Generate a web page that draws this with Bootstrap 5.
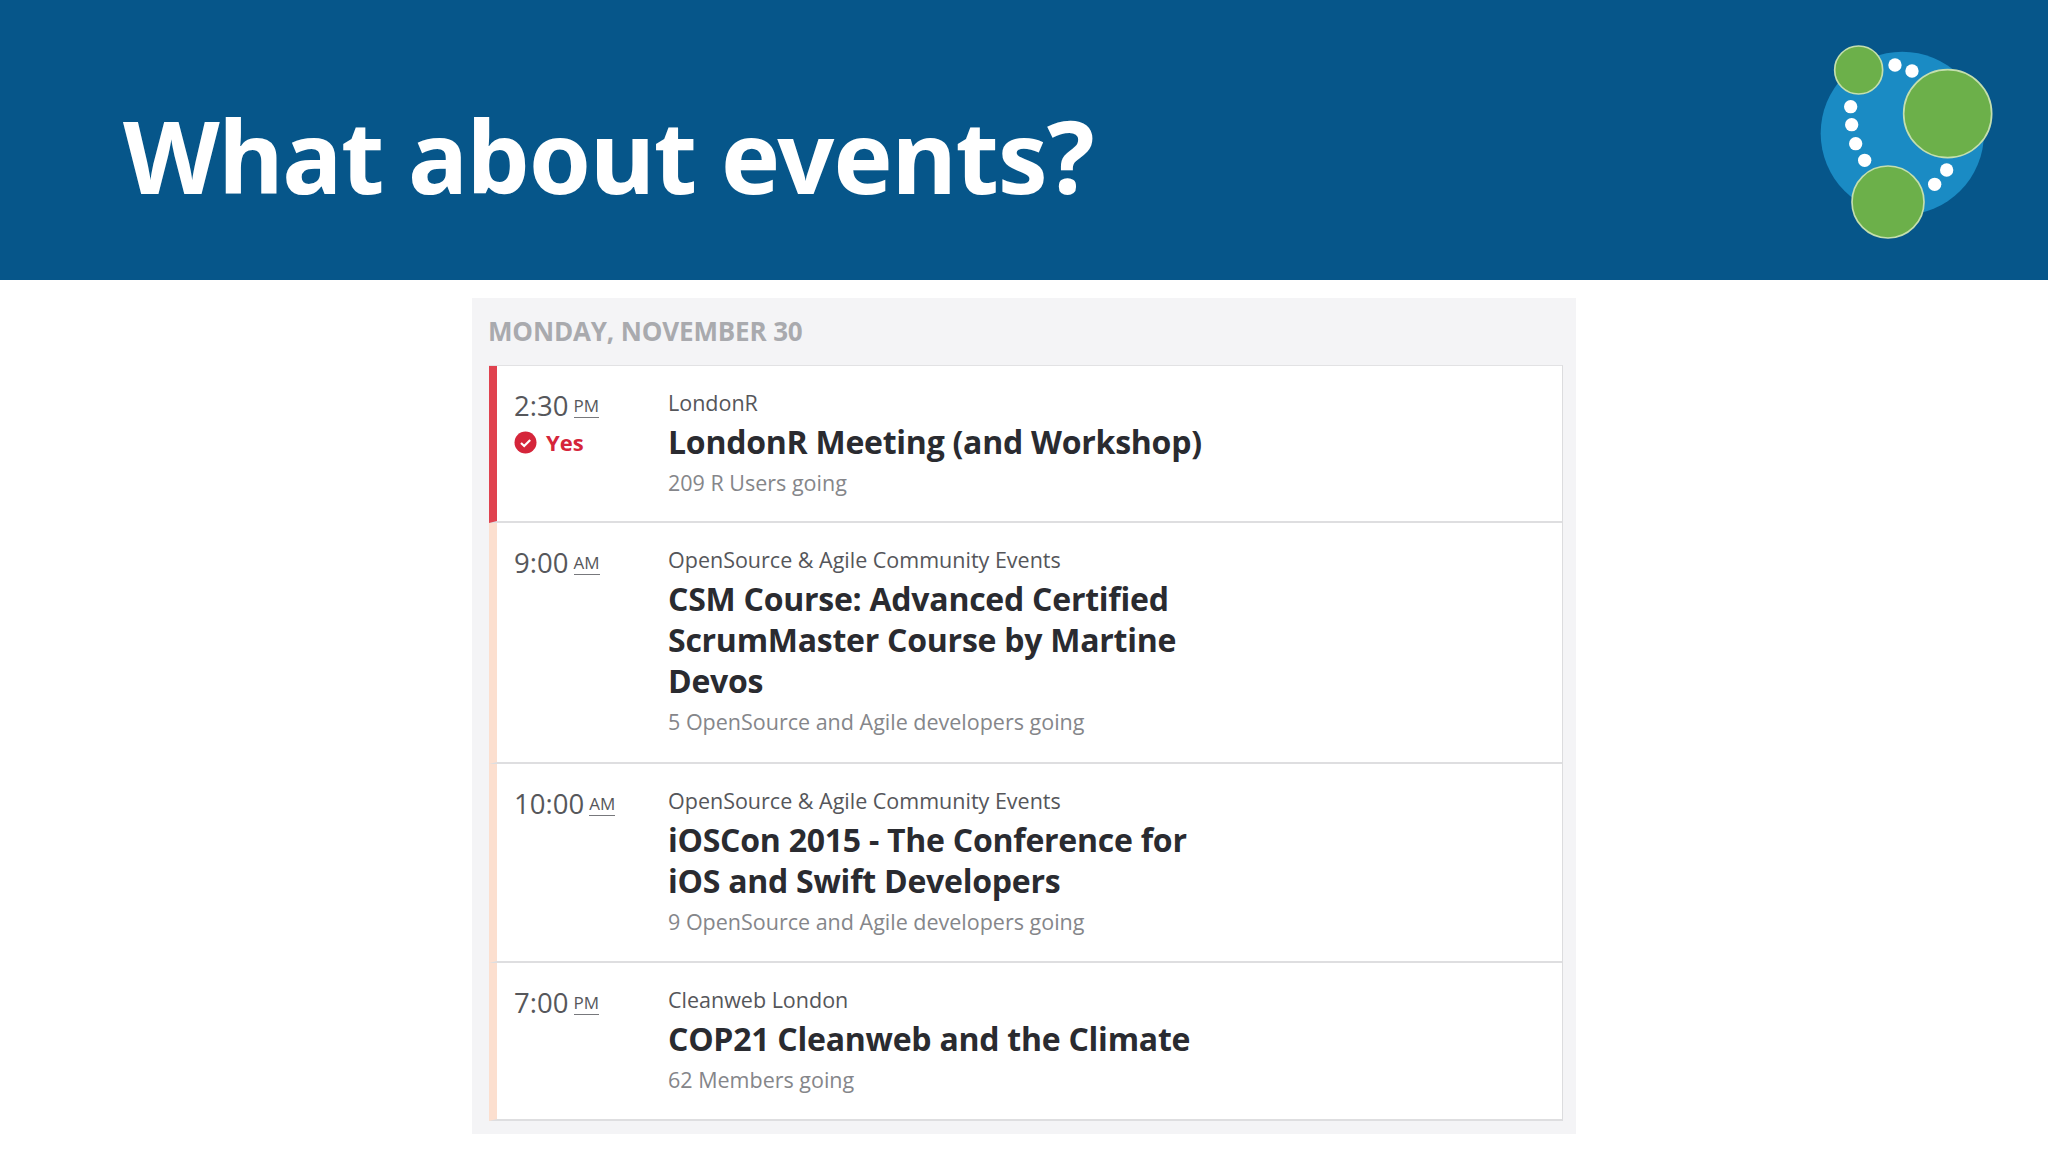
<!doctype html>
<html lang="en">
<head>
<meta charset="utf-8">
<title>What about events?</title>
<link rel="stylesheet" href="https://cdn.jsdelivr.net/npm/bootstrap@5.3.0/dist/css/bootstrap.min.css">
<style>
html,body{height:1152px;overflow:hidden;background:#fff}
body{font-family:"Open Sans","Liberation Sans",sans-serif}
.slide-banner{height:280px;background:#06568a;padding:0 28px 0 123px}
.slide-title{font-family:"Noto Sans",sans-serif;font-weight:700;font-size:100px;line-height:1;color:#fff;margin:0;letter-spacing:-1.2px;position:relative;top:15px}
.day-panel{width:1104px;margin:18px auto 0;background:#f4f4f6;padding:0 13px 13px 16px;height:836px}
.day-head{height:67px;font-size:26px;font-weight:700;color:#a9aaae;text-transform:uppercase;letter-spacing:-.15px;padding-top:15px;line-height:36px}
.day-list{background:#fff;border-right:1px solid #dcdcde;border-top:1px solid #e2e2e4;margin-left:1px}
.ev-row{border-left:8px solid #fcdfcf;border-bottom:2px solid #dedee0;padding:0 0 0 17px}
.ev-row.going{border-left-color:#e0424f}
.h1r{height:157px}.h2r{height:241px}.h3r{height:199px}.h4r{height:158px}
.ev-time{width:154px;flex:none;padding-top:23px;color:#56575b;font-size:27.5px;line-height:34px;font-weight:400}
.ev-mer{font-size:17px;line-height:18px;border-bottom:1px solid #77787c;display:inline-block;margin-left:-2px;padding-bottom:2px;vertical-align:4px}
.ev-yes{display:flex;align-items:center;gap:9px;color:#d5253a;font-weight:700;font-size:22px;line-height:26px;margin-top:6px}
.ev-body{padding-top:22px;width:560px}
.ev-group{color:#55565a;font-size:21.5px;line-height:29px}
.ev-name{color:#2a2b30;font-weight:700;font-size:32px;line-height:41px;margin:4px 0 6px;letter-spacing:-.25px}
.ev-count{color:#85868a;font-size:21.5px;line-height:29px}
</style>
</head>
<body>
<header class="slide-banner d-flex justify-content-between align-items-center">
  <h1 class="slide-title">What about events?</h1>
  <svg width="240" height="240" viewBox="0 0 720 720" aria-label="Neo4j logo" role="img">
    <circle cx="367" cy="340" r="245" fill="#1a8bc4"/>
    <g fill="#6cb04a" stroke="#c4dfae" stroke-width="5">
      <circle cx="236" cy="150" r="72"/>
      <circle cx="503" cy="281" r="132"/>
      <circle cx="324" cy="546" r="108"/>
    </g>
    <g fill="#fff">
      <circle cx="345" cy="135" r="20"/><circle cx="396" cy="153" r="20"/>
      <circle cx="212" cy="260" r="20"/><circle cx="215" cy="314" r="20"/>
      <circle cx="227" cy="371" r="20"/><circle cx="254" cy="421" r="20"/>
      <circle cx="500" cy="450" r="20"/><circle cx="464" cy="493" r="20"/>
    </g>
  </svg>
</header>
<main class="day-panel">
  <div class="day-head">Monday, November 30</div>
  <div class="day-list">
    <div class="ev-row going h1r d-flex">
      <div class="ev-time">2:30 <span class="ev-mer">PM</span>
        <div class="ev-yes"><svg width="23" height="23" viewBox="0 0 23 23"><circle cx="11.5" cy="11.5" r="11" fill="#d5253a"/><path d="M7 12l3.2 3 6-6" fill="none" stroke="#fff" stroke-width="2.2"/></svg>Yes</div>
      </div>
      <div class="ev-body"><div class="ev-group">LondonR</div><div class="ev-name">LondonR Meeting (and Workshop)</div><div class="ev-count">209 R Users going</div></div>
    </div>
    <div class="ev-row h2r d-flex">
      <div class="ev-time">9:00 <span class="ev-mer">AM</span></div>
      <div class="ev-body"><div class="ev-group">OpenSource &amp; Agile Community Events</div><div class="ev-name">CSM Course: Advanced Certified ScrumMaster Course by Martine Devos</div><div class="ev-count">5 OpenSource and Agile developers going</div></div>
    </div>
    <div class="ev-row h3r d-flex">
      <div class="ev-time">10:00 <span class="ev-mer">AM</span></div>
      <div class="ev-body"><div class="ev-group">OpenSource &amp; Agile Community Events</div><div class="ev-name">iOSCon 2015 - The Conference for iOS and Swift Developers</div><div class="ev-count">9 OpenSource and Agile developers going</div></div>
    </div>
    <div class="ev-row h4r d-flex">
      <div class="ev-time">7:00 <span class="ev-mer">PM</span></div>
      <div class="ev-body"><div class="ev-group">Cleanweb London</div><div class="ev-name">COP21 Cleanweb and the Climate</div><div class="ev-count">62 Members going</div></div>
    </div>
  </div>
</main>
<script src="https://cdn.jsdelivr.net/npm/bootstrap@5.3.0/dist/js/bootstrap.bundle.min.js"></script>
</body>
</html>
